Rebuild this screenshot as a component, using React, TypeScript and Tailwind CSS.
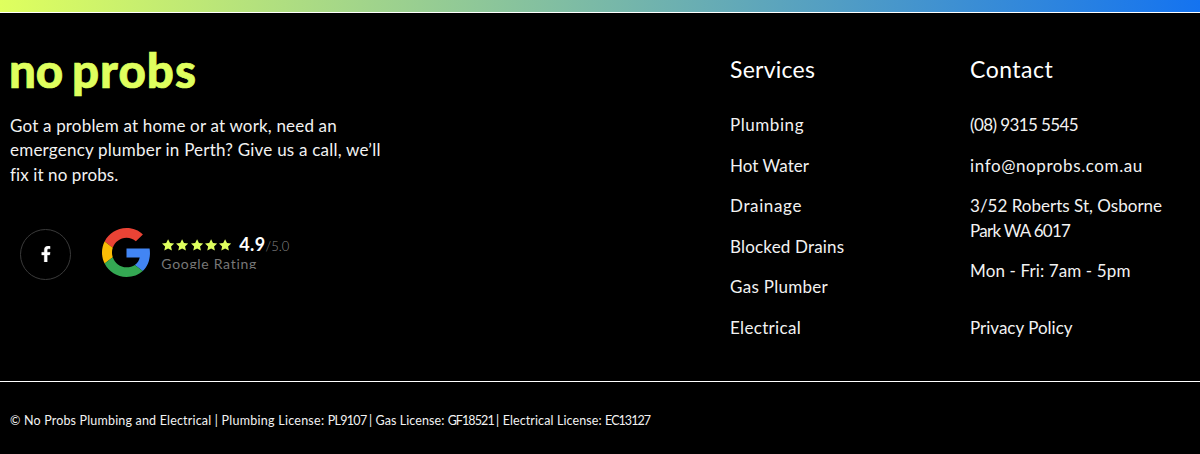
type Item = { text: string; className: string };

const services: Item[] = [
  { text: "Plumbing", className: "tracking-[0.56px]" },
  { text: "Hot Water", className: "tracking-[0.04px]" },
  { text: "Drainage", className: "tracking-[0.63px]" },
  { text: "Blocked Drains", className: "tracking-[0.18px]" },
  { text: "Gas Plumber", className: "tracking-[0.29px]" },
  { text: "Electrical", className: "tracking-[0.32px]" },
];

const legal: Item[] = [
  { text: "© No Probs Plumbing and Electrical ", className: "tracking-[0.18px]" },
  { text: "| Plumbing License: ", className: "tracking-[0.26px]" },
  { text: "PL9107 ", className: "tracking-[-0.7px]" },
  { text: "| Gas License: ", className: "tracking-[0.08px]" },
  { text: "GF18521 ", className: "tracking-[-0.9px]" },
  { text: "| Electrical License: ", className: "tracking-[0.11px]" },
  { text: "EC13127", className: "tracking-[-0.95px]" },
];

function GoogleLogo() {
  return (
    <svg viewBox="0 0 48 48" className="size-[49px] shrink-0" aria-label="Google">
      <path fill="#EA4335" d="M24 9.5c3.54 0 6.71 1.22 9.21 3.6l6.85-6.85C35.9 2.38 30.47 0 24 0 14.62 0 6.51 5.38 2.56 13.22l7.98 6.19C12.43 13.72 17.74 9.5 24 9.5z" />
      <path fill="#4285F4" d="M46.98 24.55c0-1.57-.15-3.09-.38-4.55H24v9.02h12.94c-.58 2.96-2.26 5.48-4.78 7.18l7.73 6c4.51-4.18 7.09-10.36 7.09-17.65z" />
      <path fill="#FBBC05" d="M10.53 28.59c-.48-1.45-.76-2.99-.76-4.59s.27-3.14.76-4.59l-7.98-6.19C.92 16.46 0 20.12 0 24c0 3.88.92 7.54 2.56 10.78l7.97-6.19z" />
      <path fill="#34A853" d="M24 48c6.48 0 11.93-2.13 15.89-5.81l-7.73-6c-2.15 1.45-4.92 2.3-8.16 2.3-6.26 0-11.57-4.22-13.47-9.91l-7.98 6.19C6.51 42.62 14.62 48 24 48z" />
    </svg>
  );
}

function Star() {
  return (
    <svg viewBox="0 0 24 24" className="size-[14.2px]" fill="#DFFF5E">
      <path d="M12 2l3.2 6.4 7.1.9-5.3 4.9 1.5 7.1L12 17.8l-6.5 3.5L7 14.2 1.7 9.3l7.1-.9z" />
    </svg>
  );
}

export default function App() {
  return (
    <footer className="flex h-[454px] flex-col overflow-hidden bg-black font-['Lato',sans-serif] text-[17px] leading-[24.4px] text-[#f2f2f2]">
      <div className="h-[13px] shrink-0 border-b border-white bg-linear-to-r/srgb from-[#DFFF5E] to-[#1473F0]" />
      <div className="flex h-[369px] shrink-0 border-b border-white pl-[10px]">
        <section className="w-[720px]">
          <div className="mt-[27px] -ml-[1px] flex h-[60px] gap-[9px] text-[47.5px] leading-[60px] font-black text-[#DFFF5E] [-webkit-text-stroke:0.7px_#DFFF5E]">
            <span className="tracking-[-0.2px]">no</span>
            <span className="tracking-[1px]">probs</span>
          </div>
          <p className="mt-[14px] whitespace-nowrap">
            <span className="block tracking-[0.18px]">Got a problem at home or at work, need an</span>
            <span className="block tracking-[0.22px]">emergency plumber in Perth? Give us a call, we’ll</span>
            <span className="block tracking-[0.1px]">fix it no probs.</span>
          </p>
          <div className="mt-[41.3px] flex pl-[10px]">
            <a className="flex size-[51px] items-center justify-center rounded-full border border-[#3a3a3a]">
              <svg viewBox="0 0 320 512" className="h-[16px] w-[10px]" fill="#fff" stroke="#fff" strokeWidth="10" aria-label="Facebook">
                <path d="M279 288l14-85H199v-60c0-40 18-52 52-52h40V8s-30-6-65-6c-73 0-122 44-122 124v77H23v85h81v224h95V288z" />
              </svg>
            </a>
            <div className="-mt-[0.6px] ml-[31.3px] flex">
              <GoogleLogo />
              <div className="ml-[10px] pt-[7px]">
                <div className="flex h-[20px] items-center">
                  <div className="flex">
                    <Star /><Star /><Star /><Star /><Star />
                  </div>
                  <div className="ml-[7px] flex items-baseline leading-5">
                    <span className="text-[18px] font-bold tracking-[0.4px] text-white">4.9</span>
                    <span className="text-[13px] font-light text-[#888]">/5.0</span>
                  </div>
                </div>
                <div className="h-[14px] overflow-hidden text-[14px] leading-[17px] tracking-[0.7px] text-[#777]">Google Rating</div>
              </div>
            </div>
          </div>
        </section>
        <section className="w-[240px]">
          <h2 className="mt-[41px] text-[23px] leading-[30px] tracking-[0.25px] text-white">Services</h2>
          <ul className="mt-[29px] flex flex-col gap-[16.2px]">
            {services.map((s) => (
              <li key={s.text} className={s.className}>{s.text}</li>
            ))}
          </ul>
        </section>
        <section className="w-[230px] whitespace-nowrap">
          <h2 className="mt-[41px] text-[23px] leading-[30px] tracking-[0.5px] text-white">Contact</h2>
          <ul className="mt-[29px] flex flex-col gap-[16.2px]">
            <li className="tracking-[-0.6px]">(08) 9315 5545</li>
            <li className="tracking-[0.6px]">info@noprobs.com.au</li>
            <li>
              <span className="block tracking-[0.02px]">3/52 Roberts St, Osborne</span>
              <span className="block tracking-[-0.73px]">Park WA 6017</span>
            </li>
            <li className="tracking-[0.12px]">Mon - Fri: 7am - 5pm</li>
            <li className="mt-[16.2px]">Privacy Policy</li>
          </ul>
        </section>
      </div>
      <p className="mt-[29px] pl-[10px] text-[12.5px] leading-5 whitespace-nowrap">
        {legal.map((s) => (
          <span key={s.text} className={s.className}>{s.text}</span>
        ))}
      </p>
    </footer>
  );
}
